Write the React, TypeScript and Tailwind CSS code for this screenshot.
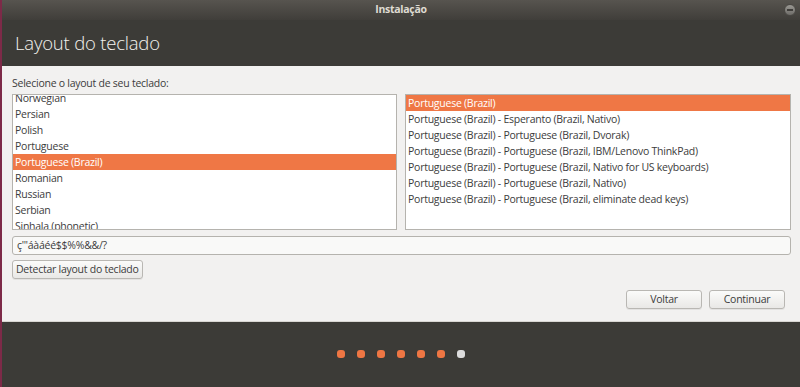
import React from 'react'

const layouts = [
  'Norwegian',
  'Persian',
  'Polish',
  'Portuguese',
  'Portuguese (Brazil)',
  'Romanian',
  'Russian',
  'Serbian',
  'Sinhala (phonetic)',
]

const variants = [
  'Portuguese (Brazil)',
  'Portuguese (Brazil) - Esperanto (Brazil, Nativo)',
  'Portuguese (Brazil) - Portuguese (Brazil, Dvorak)',
  'Portuguese (Brazil) - Portuguese (Brazil, IBM/Lenovo ThinkPad)',
  'Portuguese (Brazil) - Portuguese (Brazil, Nativo for US keyboards)',
  'Portuguese (Brazil) - Portuguese (Brazil, Nativo)',
  'Portuguese (Brazil) - Portuguese (Brazil, eliminate dead keys)',
]

const font = { fontFamily: '"Open Sans", "DejaVu Sans", sans-serif' }

function ListRow({ label, selected }: { label: string; selected: boolean }) {
  return (
    <div
      className={`h-4 leading-4 px-[2px] whitespace-nowrap ${
        selected ? 'bg-[#ef7745] text-white' : 'text-[#3c3c3c]'
      }`}
    >
      {label}
    </div>
  )
}

function Button({ label, className = '' }: { label: string; className?: string }) {
  return (
    <button
      className={`h-[19px] rounded-[3px] border border-[#b9b7b3] bg-gradient-to-b from-[#fbfbfa] to-[#e9e8e6] text-[10.5px] tracking-[-0.25px] text-[#3c3c3c] shadow-[0_1px_0_rgba(0,0,0,0.06)] ${className}`}
    >
      {label}
    </button>
  )
}

export default function App() {
  return (
    <div
      className="w-[800px] h-[387px] flex flex-col border-l-2 border-[#7d2a48] bg-[#3c3b37] overflow-hidden select-none"
      style={font}
    >
      {/* Title bar */}
      <div className="h-[20px] shrink-0 flex items-center justify-center relative bg-gradient-to-b from-[#57544f] to-[#403e3a]">
        <span className="text-[10.5px] tracking-[-0.3px] font-bold text-[#dfdbd2]">Instalação</span>
        <span className="absolute right-[4px] top-[4px] h-[12px] w-[12px] rounded-full bg-gradient-to-b from-[#9a9893] to-[#6f6d69] border border-[#4a4844] flex items-center justify-center">
          <span className="h-[2px] w-[6px] bg-[#3f3d3a]" />
        </span>
      </div>

      {/* Header */}
      <div className="h-[46px] shrink-0 flex items-center pl-[13px] bg-[#3c3b37]">
        <h1 className="text-[18.5px] tracking-[-0.2px] text-[#f3f2ee] font-light">Layout do teclado</h1>
      </div>

      {/* Content */}
      <div className="h-[256px] shrink-0 bg-[#f2f1f0] border-b border-[#d8d6d2] flex flex-col pl-[10px] pr-[9px] text-[10.5px] tracking-[-0.25px]">
        <div className="h-[28px] flex items-end pb-[2px] text-[#3c3c3c]">Selecione o layout de seu teclado:</div>

        <div className="flex gap-[8px] h-[136px]">
          <div className="w-[385px] border border-[#b5b3ae] bg-white overflow-hidden">
            <div className="-mt-[5px]">
              {layouts.map((l) => (
                <ListRow key={l} label={l} selected={l === 'Portuguese (Brazil)'} />
              ))}
            </div>
          </div>
          <div className="flex-1 border border-[#b5b3ae] bg-white overflow-hidden">
            {variants.map((v, i) => (
              <ListRow key={v} label={v} selected={i === 0} />
            ))}
          </div>
        </div>

        <div className="mt-[6px] h-[19px] rounded-[3px] border border-[#b5b3ae] bg-[#f9f9f8] flex items-center px-[4px] text-[#3c3c3c]">
          ç'"áàáéé$$%%&&/?
        </div>

        <div className="mt-[5px]">
          <Button label="Detectar layout do teclado" className="px-[3px]" />
        </div>

        <div className="mt-[11px] flex justify-end gap-[7px] pr-[6px]">
          <Button label="Voltar" className="w-[76px]" />
          <Button label="Continuar" className="w-[76px]" />
        </div>
      </div>

      {/* Progress dots */}
      <div className="flex-1 flex items-center justify-center gap-[12px] pb-[1px]">
        {[0, 1, 2, 3, 4, 5].map((i) => (
          <span key={i} className="h-[8px] w-[8px] rounded-[3px] bg-[#ee7643]" />
        ))}
        <span className="h-[8px] w-[8px] rounded-[3px] bg-[#dcdcdc]" />
      </div>
    </div>
  )
}
